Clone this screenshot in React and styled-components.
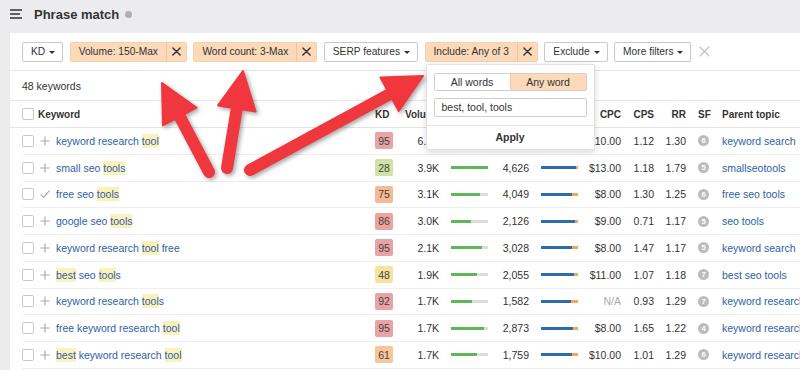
import React from "react";
import styled, { createGlobalStyle } from "styled-components";

const Global = createGlobalStyle`
  * { box-sizing: border-box; }
  html, body { margin: 0; padding: 0; background: #ececee; overflow: hidden; }
  body { font-family: "Liberation Sans", Arial, sans-serif; color: #333; }
`;

const Page = styled.div`
  position: relative;
  width: 800px;
  height: 370px;
  overflow: hidden;
  background: #ececee;
`;

const Header = styled.div`
  height: 33px;
  display: flex;
  align-items: center;
  padding: 0 0 5px 10px;
  gap: 12px;
`;

const Title = styled.h1`
  margin: 0;
  font-size: 13px;
  font-weight: bold;
  color: #333;
  display: flex;
  align-items: center;
  gap: 6px;
`;

const InfoDot = styled.span`
  width: 7px;
  height: 7px;
  border-radius: 50%;
  background: #b0b0b0;
  margin-top: 1px;
`;

const Panel = styled.div`
  margin-left: 10px;
  width: 820px;
  height: 337px;
  background: #fff;
`;

const FilterBar = styled.div`
  height: 38px;
  display: flex;
  align-items: center;
  gap: 6.5px;
  padding: 0 12px;
  border-bottom: 1px solid #e4e4e4;
`;

const Btn = styled.div`
  height: 20px;
  display: flex;
  align-items: center;
  gap: 4px;
  padding: 0 7px 0 8px;
  border: 1px solid #c9c9c9;
  border-radius: 2px;
  background: #fff;
  font-size: 10.2px;
  color: #333;
  white-space: nowrap;
`;

const Caret = styled.span`
  width: 0;
  height: 0;
  border-left: 3px solid transparent;
  border-right: 3px solid transparent;
  border-top: 3.5px solid #333;
  margin-top: 1px;
`;

const ChipWrap = styled.div`
  position: relative;
`;

const Chip = styled.div`
  height: 20px;
  display: flex;
  align-items: stretch;
  border-radius: 2px;
  background: #fcd9b8;
  border: 1px solid #f8cfa8;
  font-size: 10.2px;
  color: #333;
  white-space: nowrap;
`;

const ChipLabel = styled.span`
  display: flex;
  align-items: center;
  padding: 0 8px;
`;

const ChipClose = styled.span`
  width: 20px;
  display: flex;
  align-items: center;
  justify-content: center;
  border-left: 1px solid #f0c39b;
`;

const ClearAll = styled.span`
  display: flex;
  align-items: center;
  margin-left: 1px;
`;

const CountRow = styled.div`
  height: 30px;
  display: flex;
  align-items: center;
  padding: 0 12px;
  font-size: 10.5px;
  color: #333;
  border-bottom: 1px solid #e8e8e8;
`;

const Row = styled.div`
  height: ${(p) => (p.$head ? "27px" : "26.75px")};
  display: flex;
  align-items: center;
  font-size: ${(p) => (p.$head ? "10px" : "10.5px")};
  font-weight: ${(p) => (p.$head ? "bold" : "normal")};
  color: #333;
  white-space: nowrap;
  margin-left: ${(p) => (p.$head ? "0" : "12px")};
  padding-left: ${(p) => (p.$head ? "12px" : "0")};
  border-bottom: 1px solid ${(p) => (p.$head ? "#e4e4e4" : "#efefef")};
`;

const Cell = styled.div`
  flex: none;
  width: ${(p) => p.$w}px;
  display: flex;
  align-items: center;
  justify-content: ${(p) => (p.$right ? "flex-end" : "flex-start")};
  padding-left: ${(p) => p.$pl || 0}px;
  color: ${(p) => p.$muted ? "#aaa" : "inherit"};
`;

const Check = styled.span`
  width: 12px;
  height: 12px;
  border: 1px solid #c8c8c8;
  border-radius: 2px;
  background: #fff;
`;

const Link = styled.span`
  color: #2f5ea7;
`;

const Hl = styled.span`
  background: #fbf1bb;
  padding: 1px 0;
`;

const KdBadge = styled.span`
  width: 18px;
  height: 17px;
  border-radius: 2px;
  background: ${(p) => p.$bg};
  display: flex;
  align-items: center;
  justify-content: center;
  font-size: 10.5px;
  color: #444;
`;

const Bar = styled.div`
  width: 37px;
  height: 3px;
  display: flex;
  background: ${(p) => p.$rest};
`;

const BarFill = styled.div`
  height: 100%;
  background: ${(p) => p.$c};
`;

const SfDot = styled.span`
  width: 11px;
  height: 11px;
  border-radius: 50%;
  background: #bcbcbc;
  color: #fff;
  font-size: 7.5px;
  font-weight: bold;
  display: flex;
  align-items: center;
  justify-content: center;
`;

const Popover = styled.div`
  position: absolute;
  top: calc(100% + 2px);
  left: 1px;
  width: 169px;
  background: #fff;
  border: 1px solid #e2e2e2;
  border-radius: 2px;
  box-shadow: 0 2px 6px rgba(0, 0, 0, 0.16);
  z-index: 5;
  font-size: 10.5px;
  color: #333;
`;

const PopBody = styled.div`
  padding: 8px 7px 8px 7px;
  display: flex;
  flex-direction: column;
  gap: 7px;
  border-bottom: 1px solid #e8e8e8;
`;

const Segmented = styled.div`
  height: 18px;
  display: flex;
  border: 1px solid #cfcfcf;
  border-radius: 2px;
  overflow: hidden;
`;

const Seg = styled.div`
  flex: 1;
  display: flex;
  align-items: center;
  justify-content: center;
  background: ${(p) => (p.$active ? "#fcd9b8" : "#fff")};
  border-left: ${(p) => (p.$active ? "1px solid #f0c8a0" : "none")};
`;

const Input = styled.div`
  height: 19px;
  border: 1px solid #cfcfcf;
  border-radius: 2px;
  display: flex;
  align-items: center;
  padding-left: 7px;
`;

const Apply = styled.div`
  height: 23px;
  display: flex;
  align-items: center;
  justify-content: center;
  font-weight: bold;
`;

const Overlay = styled.svg`
  position: absolute;
  left: 0;
  top: 0;
  width: 800px;
  height: 370px;
  pointer-events: none;
  z-index: 10;
  filter: drop-shadow(2px 2px 2px rgba(0, 0, 0, 0.35));
`;

const XIcon = ({ size = 9, color = "#333", w = 1.6 }) => (
  <svg width={size} height={size} viewBox="0 0 10 10">
    <path d="M1 1L9 9M9 1L1 9" stroke={color} strokeWidth={w} strokeLinecap="round" />
  </svg>
);

const PlusIcon = () => (
  <svg width="10" height="10" viewBox="0 0 10 10">
    <path d="M5 0.5V9.5M0.5 5H9.5" stroke="#a8a8a8" strokeWidth="1.1" />
  </svg>
);

const TickIcon = () => (
  <svg width="10" height="10" viewBox="0 0 10 10">
    <path d="M0.8 5.6L3.6 8.4L9.4 1.6" stroke="#a8a8a8" strokeWidth="1.1" fill="none" />
  </svg>
);

const Burger = () => (
  <svg width="12" height="10" viewBox="0 0 12 10">
    <path d="M0 1H12M0 5H10M0 9H12" stroke="#333" strokeWidth="1.6" />
  </svg>
);

const Arrow = ({ tail, tip, head = 38, half = 19 }) => {
  const dx = tip[0] - tail[0];
  const dy = tip[1] - tail[1];
  const len = Math.hypot(dx, dy);
  const ux = dx / len;
  const uy = dy / len;
  const bx = tip[0] - ux * head;
  const by = tip[1] - uy * head;
  const nx = -uy;
  const ny = ux;
  const p1 = `${bx + nx * half},${by + ny * half}`;
  const p2 = `${bx - nx * half},${by - ny * half}`;
  return (
    <g fill="#f0373d" stroke="#f0373d">
      <line x1={tail[0]} y1={tail[1]} x2={bx + ux * 4} y2={by + uy * 4} strokeWidth="12" strokeLinecap="round" />
      <polygon points={`${tip[0]},${tip[1]} ${p1} ${p2}`} strokeWidth="2" strokeLinejoin="round" />
    </g>
  );
};

const KD_COLORS = {
  95: "#e9a2a6",
  28: "#d2e2a4",
  75: "#f6b994",
  86: "#eca39b",
  48: "#f8e29e",
  92: "#e9a2a6",
  61: "#f7c698",
};

const rows = [
  { kw: "keyword research [tool]", kd: 95, vol: "6.9K", vb: 0.9, clicks: "5,201", cb: 0.9, cpc: "$10.00", cps: "1.12", rr: "1.30", sf: 6, parent: "keyword search" },
  { kw: "small seo [tools]", kd: 28, vol: "3.9K", vb: 1, clicks: "4,626", cb: 0.955, cpc: "$13.00", cps: "1.18", rr: "1.79", sf: 5, parent: "smallseotools" },
  { kw: "free seo [tools]", kd: 75, vol: "3.1K", vb: 0.78, clicks: "4,049", cb: 0.84, cpc: "$8.00", cps: "1.30", rr: "1.25", sf: 6, parent: "free seo tools", done: true },
  { kw: "google seo [tools]", kd: 86, vol: "3.0K", vb: 0.55, clicks: "2,126", cb: 0.92, cpc: "$9.00", cps: "0.71", rr: "1.17", sf: 5, parent: "seo tools" },
  { kw: "keyword research [tool] free", kd: 95, vol: "2.1K", vb: 0.83, clicks: "3,028", cb: 0.85, cpc: "$8.00", cps: "1.47", rr: "1.17", sf: 5, parent: "keyword search" },
  { kw: "[best] seo [tool]s", kd: 48, vol: "1.9K", vb: 0.71, clicks: "2,055", cb: 0.88, cpc: "$11.00", cps: "1.07", rr: "1.18", sf: 7, parent: "best seo tools" },
  { kw: "keyword research [tool]s", kd: 92, vol: "1.7K", vb: 0.57, clicks: "1,582", cb: 0.8, cpc: "N/A", cps: "0.93", rr: "1.29", sf: 7, parent: "keyword research" },
  { kw: "free keyword research [tool]", kd: 95, vol: "1.7K", vb: 0.89, clicks: "2,873", cb: 0.87, cpc: "$8.00", cps: "1.65", rr: "1.22", sf: 4, parent: "keyword research" },
  { kw: "[best] keyword research [tool]", kd: 61, vol: "1.7K", vb: 0.69, clicks: "1,759", cb: 0.83, cpc: "$10.00", cps: "1.01", rr: "1.29", sf: 6, parent: "keyword research" },
];

const renderKw = (s) =>
  s.split(/(\[[^\]]+\])/).filter(Boolean).map((part, i) =>
    part.startsWith("[") ? <Hl key={i}>{part.slice(1, -1)}</Hl> : <React.Fragment key={i}>{part}</React.Fragment>
  );

const Filter = ({ label, caret = true }) => (
  <Btn>
    {label}
    {caret && <Caret />}
  </Btn>
);

const ActiveChip = ({ label, children }) => (
  <ChipWrap>
    <Chip>
      <ChipLabel>{label}</ChipLabel>
      <ChipClose>
        <XIcon />
      </ChipClose>
    </Chip>
    {children}
  </ChipWrap>
);

export default function App() {
  return (
    <Page>
      <Global />
      <Header>
        <Burger />
        <Title>
          Phrase match
          <InfoDot />
        </Title>
      </Header>
      <Panel>
        <FilterBar>
          <Filter label="KD" />
          <ActiveChip label="Volume: 150-Max" />
          <ActiveChip label="Word count: 3-Max" />
          <Filter label="SERP features" />
          <ActiveChip label="Include: Any of 3">
            <Popover>
              <PopBody>
                <Segmented>
                  <Seg>All words</Seg>
                  <Seg $active>Any word</Seg>
                </Segmented>
                <Input>best, tool, tools</Input>
              </PopBody>
              <Apply>Apply</Apply>
            </Popover>
          </ActiveChip>
          <Filter label="Exclude" />
          <Filter label="More filters" />
          <ClearAll>
            <XIcon size={11} color="#bdbdbd" w={1.2} />
          </ClearAll>
        </FilterBar>
        <CountRow>48 keywords</CountRow>
        <Row $head>
          <Cell $w={16}><Check /></Cell>
          <Cell $w={337}>Keyword</Cell>
          <Cell $w={30}>KD</Cell>
          <Cell $w={84}>Volume</Cell>
          <Cell $w={89}>Clicks</Cell>
          <Cell $w={43} $right>CPC</Cell>
          <Cell $w={33} $right>CPS</Cell>
          <Cell $w={32} $right>RR</Cell>
          <Cell $w={36} $pl={12}>SF</Cell>
          <Cell $w={120}>Parent topic</Cell>
        </Row>
        {rows.map((r, i) => (
          <Row key={i}>
            <Cell $w={18}><Check /></Cell>
            <Cell $w={16}>{r.done ? <TickIcon /> : <PlusIcon />}</Cell>
            <Cell $w={319}><Link>{renderKw(r.kw)}</Link></Cell>
            <Cell $w={30}><KdBadge $bg={KD_COLORS[r.kd]}>{r.kd}</KdBadge></Cell>
            <Cell $w={34} $right>{r.vol}</Cell>
            <Cell $w={50} $pl={12}>
              <Bar $rest="#dcdcdc">
                <BarFill $c="#5cb85a" style={{ width: `${r.vb * 100}%` }} />
              </Bar>
            </Cell>
            <Cell $w={40} $right>{r.clicks}</Cell>
            <Cell $w={49} $pl={12}>
              <Bar $rest="#f6a45a">
                <BarFill $c="#2b6db0" style={{ width: `${r.cb * 100}%` }} />
              </Bar>
            </Cell>
            <Cell $w={43} $right $muted={r.cpc === "N/A"}>{r.cpc}</Cell>
            <Cell $w={33} $right>{r.cps}</Cell>
            <Cell $w={32} $right>{r.rr}</Cell>
            <Cell $w={36} $pl={12}><SfDot>{r.sf}</SfDot></Cell>
            <Cell $w={120}><Link>{r.parent}</Link></Cell>
          </Row>
        ))}
      </Panel>
      <Overlay viewBox="0 0 800 370">
        <Arrow tail={[209, 172]} tip={[162, 83]} />
        <Arrow tail={[227, 168]} tip={[243, 71]} />
        <Arrow tail={[250, 170]} tip={[423, 76]} />
      </Overlay>
    </Page>
  );
}
